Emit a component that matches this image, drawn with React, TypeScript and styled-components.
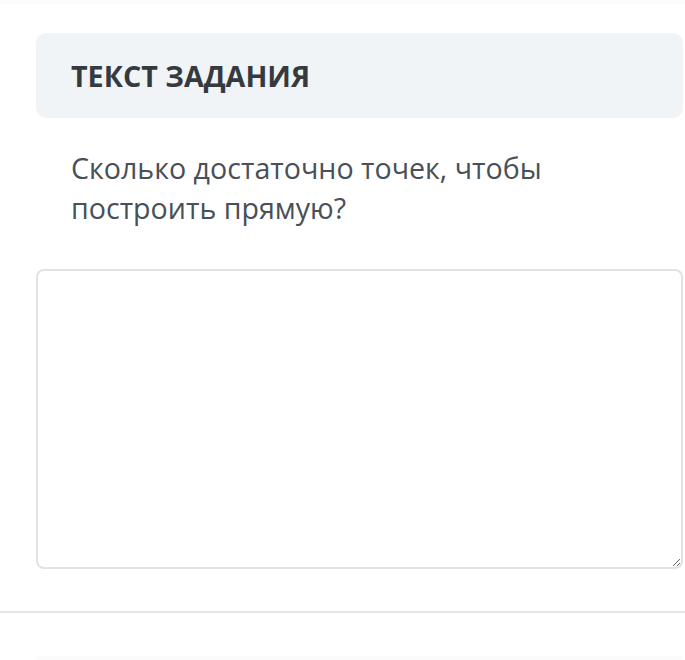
import React from "react";
import styled, { createGlobalStyle } from "styled-components";

const Global = createGlobalStyle`
  html, body { margin: 0; padding: 0; background: #ffffff; }
  body { font-family: "Open Sans", "Noto Sans", sans-serif; }
  * { box-sizing: border-box; }
`;

const Page = styled.div`
  width: 685px;
  height: 660px;
  overflow: hidden;
  display: flex;
  flex-direction: column;
  border-top: 4px solid #fbfbfb;
`;

const Section = styled.section`
  padding: 29px 2px 0 36px;
  display: flex;
  flex-direction: column;
`;

const Header = styled.div`
  height: 85px;
  background: #f1f4f6;
  border-radius: 10px;
  display: flex;
  align-items: center;
  padding-left: 35px;
`;

const Title = styled.h2`
  margin: 0;
  font-size: 28.7px;
  font-weight: 700;
  color: #343a40;
`;

const Question = styled.p`
  margin: 30px 0 0 35px;
  font-size: 28.6px;
  line-height: 40px;
  color: #495057;
  max-width: 570px;
`;

const Answer = styled.textarea`
  margin-top: 41px;
  height: 300px;
  width: 100%;
  border: 2px solid #e2e2e2;
  border-radius: 8px;
  background: #fff;
  resize: vertical;
  outline: none;
  font-family: inherit;
  font-size: 20px;
`;

const Divider = styled.hr`
  margin: 42px 0 0;
  border: none;
  border-top: 2px solid #e5e5e5;
  height: 0;
`;

const NextBlock = styled.div`
  margin: 43px 2px 0 36px;
  height: 40px;
  background: #fbfbfb;
  border-radius: 10px 10px 0 0;
`;

export default function App() {
  return (
    <Page>
      <Global />
      <Section>
        <Header>
          <Title>ТЕКСТ ЗАДАНИЯ</Title>
        </Header>
        <Question>Сколько достаточно точек, чтобы построить прямую?</Question>
        <Answer aria-label="Ответ" />
      </Section>
      <Divider />
      <NextBlock />
    </Page>
  );
}
